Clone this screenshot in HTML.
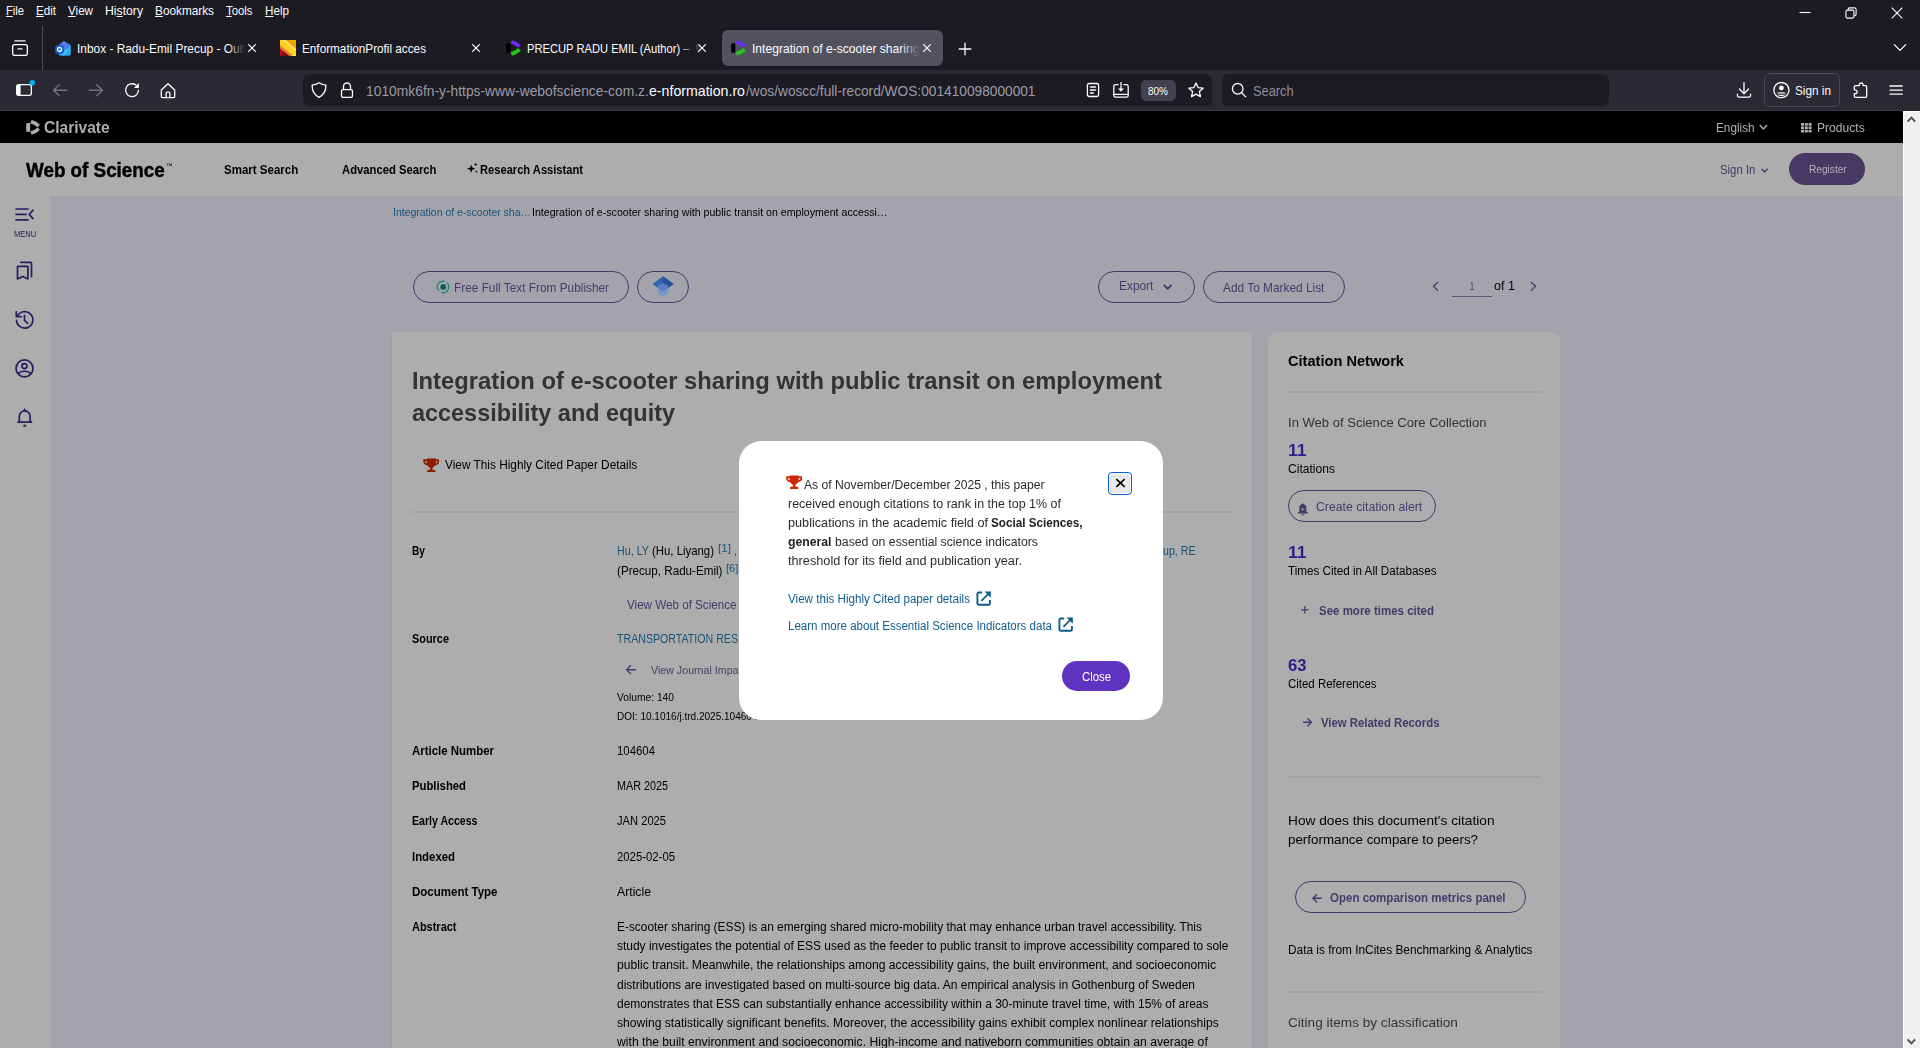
<!DOCTYPE html>
<html lang="en"><head><meta charset="utf-8"><title>Integration of e-scooter sharing with public transit on employment accessibility and equity - Web of Science Core Collection</title>
<style>
html,body{margin:0;padding:0;overflow:hidden;}
body{width:1920px;height:1048px;overflow:hidden;position:relative;background:#A3A3AC;font-family:"Liberation Sans",sans-serif;}
.b{position:absolute;display:block;box-sizing:border-box;}
.t{position:absolute;white-space:nowrap;line-height:1;transform-origin:0 0;font-family:"Liberation Sans",sans-serif;}
u{text-decoration-thickness:1px;text-underline-offset:1px;}
</style></head><body>
<div class="b" style="left:0px;top:0px;width:1920px;height:70px;background:#1C1B22;"></div>
<div class="b" style="left:0px;top:70px;width:1920px;height:41px;background:#2B2A33;"></div>
<div class="b" style="left:0px;top:110px;width:1903px;height:1px;background:#3A3944;"></div>
<div class="b" style="left:42px;top:26px;width:1px;height:44px;background:#4A4952;"></div>
<div class="b" style="left:722px;top:30px;width:221px;height:36px;background:#52525E;border-radius:6px;box-shadow:0 0 2px rgba(0,0,0,0.6);"></div>
<div class="b" style="left:303px;top:74px;width:909px;height:32px;background:#1C1B22;border-radius:6px;"></div>
<div class="b" style="left:1222px;top:74px;width:387px;height:32px;background:#1C1B22;border-radius:6px;"></div>
<div class="b" style="left:1141px;top:80px;width:35px;height:21px;background:#42414D;border-radius:5px;"></div>
<div class="b" style="left:1764px;top:73px;width:76px;height:34px;border:1px solid #4A4954;border-radius:6px;"></div>
<svg class="b" style="left:12px;top:40px;" width="16" height="16" viewBox="0 0 16 16"><path d="M3 0.9h10" fill="none" stroke="#FBFBFE" stroke-width="1.3" stroke-linecap="round" stroke-linejoin="round"/><rect x="0.65" y="4.6" width="14.7" height="10.8" rx="2" fill="none" stroke="#FBFBFE" stroke-width="1.3" stroke-linecap="round" stroke-linejoin="round"/><path d="M6 8.9h4" fill="none" stroke="#FBFBFE" stroke-width="1.3" stroke-linecap="round" stroke-linejoin="round"/></svg>
<svg class="b" style="left:55px;top:40px;" width="16" height="16" viewBox="0 0 16 16"><defs><linearGradient id="og1" x1="0" y1="0" x2="1" y2="1"><stop offset="0" stop-color="#35B8F1"/><stop offset="1" stop-color="#1B6FD8"/></linearGradient>
<linearGradient id="og2" x1="0" y1="0" x2="1" y2="1"><stop offset="0" stop-color="#7A5CF0"/><stop offset="1" stop-color="#3B8FEA"/></linearGradient></defs>
<path d="M8.5 1 L15.6 5.2 V14 a1.6 1.6 0 0 1 -1.6 1.6 H4 L3 6 Z" fill="url(#og1)"/>
<path d="M8.5 1 L15.6 5.2 L9 10.5 L4.5 5 Z" fill="url(#og2)" opacity="0.9"/>
<path d="M15.6 6.5 V14 a1.6 1.6 0 0 1 -1.6 1.6 H6 Z" fill="#28A8EA"/>
<path d="M9 10.8 L15.6 6.2 V8 L9 15.6 H5 Z" fill="#50D9FF" opacity="0.55"/>
<rect x="0.2" y="5.2" width="8.6" height="8.6" rx="1.8" fill="#0F5FD0"/>
<circle cx="4.5" cy="9.5" r="2" fill="none" stroke="#fff" stroke-width="1.3"/></svg>
<svg class="b" style="left:280px;top:40px;" width="16" height="16" viewBox="0 0 16 16"><defs><linearGradient id="eg" x1="0" y1="0.4" x2="0.6" y2="1"><stop offset="0" stop-color="#B8141C"/><stop offset="1" stop-color="#7A0A0E"/></linearGradient></defs>
<rect width="16" height="16" fill="#EFA500"/>
<path d="M0 0 H5 L16 9.5 V16 H13 L0 5.5 Z" fill="#FFD21E"/>
<path d="M3 0 H5.2 L16 9.3 V11 Z" fill="#FFE98A"/>
<path d="M0 5 L13.5 16 H9.5 L0 8.4 Z" fill="#F0803C"/>
<path d="M0 8.2 L9.7 16 H0 Z" fill="url(#eg)"/>
<path d="M11.5 15.2 L16 15.2 V16 H12.3 Z" fill="#FFE98A"/></svg>
<svg class="b" style="left:505.5px;top:40px;" width="15" height="16" viewBox="0 0 14.2 14.8"><path d="M0.5 3 H4.1 V11.800 H0.5 Q-0.3 7.400 0.5 3 Z" fill="#000"/>
<path d="M5.7 0 Q10.800 1.100 14 4.700 L11.650 7.250 Q8.500 4.600 4.250 3.250 Z" fill="#6D2DF5"/>
<path d="M5.7 14.750 Q10.800 13.650 14 10.050 L11.650 7.500 Q8.500 10.150 4.250 11.500 Z" fill="#25C41A"/></svg>
<svg class="b" style="left:730.5px;top:40px;" width="15" height="16" viewBox="0 0 14.2 14.8"><path d="M0.5 3 H4.1 V11.800 H0.5 Q-0.3 7.400 0.5 3 Z" fill="#000"/>
<path d="M5.7 0 Q10.800 1.100 14 4.700 L11.650 7.250 Q8.500 4.600 4.250 3.250 Z" fill="#6D2DF5"/>
<path d="M5.7 14.750 Q10.800 13.650 14 10.050 L11.650 7.500 Q8.500 10.150 4.250 11.500 Z" fill="#25C41A"/></svg>
<svg class="b" style="left:247px;top:43px;" width="10" height="10" viewBox="0 0 10 10"><path d="M1.6 1.6 L8.4 8.4 M8.4 1.6 L1.6 8.4" stroke="#FBFBFE" stroke-width="1.25" stroke-linecap="round"/></svg>
<svg class="b" style="left:471px;top:43px;" width="10" height="10" viewBox="0 0 10 10"><path d="M1.6 1.6 L8.4 8.4 M8.4 1.6 L1.6 8.4" stroke="#FBFBFE" stroke-width="1.25" stroke-linecap="round"/></svg>
<svg class="b" style="left:697px;top:43px;" width="10" height="10" viewBox="0 0 10 10"><path d="M1.6 1.6 L8.4 8.4 M8.4 1.6 L1.6 8.4" stroke="#FBFBFE" stroke-width="1.25" stroke-linecap="round"/></svg>
<svg class="b" style="left:922px;top:43px;" width="10" height="10" viewBox="0 0 10 10"><path d="M1.6 1.6 L8.4 8.4 M8.4 1.6 L1.6 8.4" stroke="#FBFBFE" stroke-width="1.25" stroke-linecap="round"/></svg>
<svg class="b" style="left:958px;top:42px;" width="14" height="14" viewBox="0 0 14 14"><path d="M7 1.2 V12.8 M1.2 7 H12.8" stroke="#FBFBFE" stroke-width="1.3" stroke-linecap="round"/></svg>
<svg class="b" style="left:1799px;top:7px;" width="12" height="12" viewBox="0 0 12 12"><path d="M0.5 5.5 H11.5" stroke="#FBFBFE" stroke-width="1.1"/></svg>
<svg class="b" style="left:1845px;top:7px;" width="12" height="12" viewBox="0 0 12 12"><rect x="0.9" y="3.1" width="8" height="8" rx="1.6" fill="none" stroke="#FBFBFE" stroke-width="1.1"/><path d="M3.1 2.9 V2.5 a1.6 1.6 0 0 1 1.6 -1.6 H9.5 a1.6 1.6 0 0 1 1.6 1.6 V7.3 a1.6 1.6 0 0 1 -1.6 1.6 H9.1" fill="none" stroke="#FBFBFE" stroke-width="1.1"/></svg>
<svg class="b" style="left:1891px;top:7px;" width="12" height="12" viewBox="0 0 12 12"><path d="M0.7 0.7 L11.3 11.3 M11.3 0.7 L0.7 11.3" stroke="#FBFBFE" stroke-width="1.15"/></svg>
<svg class="b" style="left:1893px;top:43px;" width="14" height="10" viewBox="0 0 14 10"><path d="M1.3 1.6 L7 7.4 L12.7 1.6" fill="none" stroke="#FBFBFE" stroke-width="1.3" stroke-linecap="round" stroke-linejoin="round"/></svg>
<svg class="b" style="left:16px;top:82px;overflow:visible;" width="20" height="16" viewBox="0 0 20 16"><rect x="0.65" y="2.65" width="14.7" height="10.7" rx="2" fill="none" stroke="#FBFBFE" stroke-width="1.3" stroke-linecap="round" stroke-linejoin="round"/><path d="M0.65 4.6 a2 2 0 0 1 2 -2 H4.6 V13.4 H2.6 a2 2 0 0 1 -2 -2 Z" fill="#FBFBFE"/><circle cx="16.3" cy="0.8" r="2.7" fill="#00B3F4"/></svg>
<svg class="b" style="left:52px;top:82px;" width="16" height="16" viewBox="0 0 16 16"><path d="M14.6 8.2 H1.7 M7.2 2.7 L1.6 8.2 L7.2 13.700" fill="none" stroke="#75747F" stroke-width="1.35" stroke-linecap="round" stroke-linejoin="round"/></svg>
<svg class="b" style="left:88px;top:82px;" width="16" height="16" viewBox="0 0 16 16"><path d="M1.4 8.2 H14.3 M8.8 2.7 L14.4 8.2 L8.8 13.700" fill="none" stroke="#75747F" stroke-width="1.35" stroke-linecap="round" stroke-linejoin="round"/></svg>
<svg class="b" style="left:124px;top:82px;" width="16" height="16" viewBox="0 0 16 16"><path d="M14.4 8.2 A6.4 6.4 0 1 1 11.9 3.1" fill="none" stroke="#FBFBFE" stroke-width="1.3" stroke-linecap="round" stroke-linejoin="round"/><path d="M14.9 1.1 V6.1 H9.9 Z" fill="#FBFBFE"/></svg>
<svg class="b" style="left:159.5px;top:82.5px;" width="16" height="16" viewBox="0 0 16 16"><path d="M1.3 7 L8 0.700 L14.7 7 V13.400 a1.3 1.3 0 0 1 -1.3 1.3 H2.6 a1.3 1.3 0 0 1 -1.3 -1.3 Z" fill="none" stroke="#FBFBFE" stroke-width="1.3" stroke-linecap="round" stroke-linejoin="round"/><path d="M6.100 14.500 V10.200 a1 1 0 0 1 1 -1 H8.900 a1 1 0 0 1 1 1 V14.500" fill="none" stroke="#FBFBFE" stroke-width="1.3" stroke-linecap="round" stroke-linejoin="round"/></svg>
<svg class="b" style="left:311px;top:82px;" width="16" height="16" viewBox="0 0 16 16"><path d="M8 0.8 C5.5 2.4 3.2 3 1.1 3.2 C1 8.5 3.2 12.9 8 15.3 C12.8 12.9 15 8.5 14.9 3.2 C12.8 3 10.5 2.4 8 0.8 Z" fill="none" stroke="#FBFBFE" stroke-width="1.3" stroke-linecap="round" stroke-linejoin="round"/></svg>
<svg class="b" style="left:339px;top:82px;" width="16" height="16" viewBox="0 0 16 16"><rect x="2.5" y="7.6" width="11" height="7.8" rx="1.6" fill="none" stroke="#FBFBFE" stroke-width="1.3" stroke-linecap="round" stroke-linejoin="round"/><path d="M4.5 7.4 V4.5 a3.5 3.5 0 0 1 7 0 V7.4" fill="none" stroke="#FBFBFE" stroke-width="1.3" stroke-linecap="round" stroke-linejoin="round"/></svg>
<svg class="b" style="left:1085px;top:82px;" width="16" height="16" viewBox="0 0 16 16"><rect x="2.4" y="1.500" width="11.2" height="13" rx="1.8" fill="none" stroke="#FBFBFE" stroke-width="1.3" stroke-linecap="round" stroke-linejoin="round"/><path d="M5.400 5 H10.600 M5.400 8 H10.600 M5.400 11 H8.400" fill="none" stroke="#FBFBFE" stroke-width="1.3" stroke-linecap="round" stroke-linejoin="round"/></svg>
<svg class="b" style="left:1113px;top:81.5px;" width="16" height="16" viewBox="0 0 16 16"><path d="M5.2 2.6 H2.4 a1.6 1.6 0 0 0 -1.6 1.6 V13.6 a1.6 1.6 0 0 0 1.6 1.6 H13.6 a1.6 1.6 0 0 0 1.6 -1.6 V4.2 a1.6 1.6 0 0 0 -1.6 -1.6 H10.8 M0.8 12.4 H15.2" fill="none" stroke="#FBFBFE" stroke-width="1.3" stroke-linecap="round" stroke-linejoin="round"/><path d="M8 0.6 V8.4" fill="none" stroke="#FBFBFE" stroke-width="1.3" stroke-linecap="round" stroke-linejoin="round"/><path d="M5 6.6 H11 L8 9.8 Z" fill="#FBFBFE"/></svg>
<svg class="b" style="left:1188px;top:82px;" width="16" height="16" viewBox="0 0 16 16"><path d="M8 1 L10.1 5.6 L15.1 6.2 L11.4 9.6 L12.4 14.6 L8 12.1 L3.6 14.6 L4.6 9.6 L0.9 6.2 L5.9 5.6 Z" fill="none" stroke="#FBFBFE" stroke-width="1.3" stroke-linecap="round" stroke-linejoin="round"/></svg>
<svg class="b" style="left:1231px;top:82px;" width="16" height="16" viewBox="0 0 16 16"><circle cx="6.7" cy="6.8" r="5.3" fill="none" stroke="#FBFBFE" stroke-width="1.3" stroke-linecap="round" stroke-linejoin="round"/><path d="M10.6 10.7 L14.8 14.9" fill="none" stroke="#FBFBFE" stroke-width="1.3" stroke-linecap="round" stroke-linejoin="round"/></svg>
<svg class="b" style="left:1735.5px;top:81.5px;" width="16" height="16" viewBox="0 0 16 16"><path d="M8 0.7 V11.6 M3.4 7 L8 11.8 L12.6 7 M1.4 12.2 V13.6 a1.6 1.6 0 0 0 1.6 1.6 H13 a1.6 1.6 0 0 0 1.6 -1.6 V12.2" fill="none" stroke="#FBFBFE" stroke-width="1.3" stroke-linecap="round" stroke-linejoin="round"/></svg>
<svg class="b" style="left:1772.5px;top:82px;" width="17" height="17" viewBox="0 0 17 17"><circle cx="8.4" cy="8.1" r="7.6" fill="none" stroke="#FBFBFE" stroke-width="1.3" stroke-linecap="round" stroke-linejoin="round"/><circle cx="8.4" cy="5.9" r="2.4" fill="#FBFBFE"/><path d="M3.9 11.2 C4.6 9.8 12.2 9.8 12.9 11.2 V11.6 H3.9 Z" fill="#FBFBFE"/><path d="M4.5 12.8 H12.3 C11 14.4 5.8 14.4 4.5 12.8 Z" fill="#FBFBFE"/></svg>
<svg class="b" style="left:1852.5px;top:82px;" width="16" height="16" viewBox="0 0 16 16"><path d="M6.3 3.6 V2.9 a1.9 1.9 0 0 1 3.8 0 V3.6 H12.4 a1.3 1.3 0 0 1 1.3 1.3 V14 a1.3 1.3 0 0 1 -1.3 1.3 H2.6 a1.3 1.3 0 0 1 -1.3 -1.3 V11.6 H2.2 a1.9 1.9 0 0 0 0 -3.8 H1.3 V4.9 a1.3 1.3 0 0 1 1.3 -1.3 Z" fill="none" stroke="#FBFBFE" stroke-width="1.3" stroke-linecap="round" stroke-linejoin="round"/></svg>
<svg class="b" style="left:1888px;top:82px;" width="16" height="16" viewBox="0 0 16 16"><path d="M2 4 H14.3 M2 8.1 H14.3 M2 12.1 H14.3" fill="none" stroke="#FBFBFE" stroke-width="1.3" stroke-linecap="round" stroke-linejoin="round"/></svg>
<span class="t" style="left:6.00px;top:5px;font-size:12px;color:#FBFBFE;transform:scaleX(0.9298);"><u>F</u>ile</span>
<span class="t" style="left:36.00px;top:5px;font-size:12px;color:#FBFBFE;transform:scaleX(0.9660);"><u>E</u>dit</span>
<span class="t" style="left:68.00px;top:5px;font-size:12px;color:#FBFBFE;transform:scaleX(0.9685);"><u>V</u>iew</span>
<span class="t" style="left:105.00px;top:5px;font-size:12px;color:#FBFBFE;transform:scaleX(1.0171);">Hi<u>s</u>tory</span>
<span class="t" style="left:155.00px;top:5px;font-size:12px;color:#FBFBFE;transform:scaleX(0.9828);"><u>B</u>ookmarks</span>
<span class="t" style="left:226.00px;top:5px;font-size:12px;color:#FBFBFE;transform:scaleX(0.9459);"><u>T</u>ools</span>
<span class="t" style="left:265.00px;top:5px;font-size:12px;color:#FBFBFE;transform:scaleX(0.9722);"><u>H</u>elp</span>
<span class="t" style="left:76.50px;top:42px;font-size:13px;color:#FBFBFE;transform:scaleX(0.9146);">Inbox - Radu-Emil Precup - Outl</span>
<span class="t" style="left:301.75px;top:42px;font-size:13px;color:#FBFBFE;transform:scaleX(0.9033);">EnformationProfil acces</span>
<span class="t" style="left:526.50px;top:42px;font-size:13px;color:#FBFBFE;transform:scaleX(0.8585);">PRECUP RADU EMIL (Author) –</span>
<span class="t" style="left:692.50px;top:42px;font-size:13px;color:#FBFBFE;opacity:0.25;transform:scaleX(0.6107);">W</span>
<span class="t" style="left:751.50px;top:42px;font-size:13px;color:#FBFBFE;transform:scaleX(0.9309);">Integration of e-scooter sharing</span>
<div class="b" style="left:228px;top:40px;width:18px;height:18px;background:linear-gradient(90deg,rgba(28,27,34,0),#1C1B22 95%)"></div>
<div class="b" style="left:680px;top:40px;width:16px;height:18px;background:linear-gradient(90deg,rgba(28,27,34,0),#1C1B22 95%)"></div>
<div class="b" style="left:900px;top:40px;width:20px;height:18px;background:linear-gradient(90deg,rgba(82,82,94,0),#52525E 100%)"></div>
<span class="t" style="left:365.75px;top:84px;font-size:14.5px;color:#9C9CA8;transform:scaleX(0.9535);">1010mk6fn-y-https-www-webofscience-com.z.</span>
<span class="t" style="left:649.00px;top:84px;font-size:14.5px;color:#FBFBFE;transform:scaleX(0.9763);">e-nformation.ro</span>
<span class="t" style="left:745.50px;top:84px;font-size:14.5px;color:#9C9CA8;transform:scaleX(0.9452);">/wos/woscc/full-record/WOS:001410098000001</span>
<span class="t" style="left:1148.00px;top:86px;font-size:10.6px;color:#FBFBFE;transform:scaleX(0.9433);">80%</span>
<span class="t" style="left:1252.50px;top:84px;font-size:14px;color:#8F8F9D;transform:scaleX(0.9130);">Search</span>
<span class="t" style="left:1795.00px;top:84px;font-size:13px;color:#FBFBFE;transform:scaleX(0.9057);">Sign in</span>
<div id="page" style="position:absolute;left:0;top:0;width:1920px;height:1048px;overflow:hidden;will-change:transform">
<div class="b" style="left:0px;top:111px;width:1903px;height:32px;background:#000;"></div>
<div class="b" style="left:0px;top:143px;width:1903px;height:53px;background:#ADADAD;"></div>
<div class="b" style="left:0px;top:196px;width:50px;height:852px;background:#ADADAD;"></div>
<div class="b" style="left:1903px;top:111px;width:17px;height:937px;background:#F0F0F0;border-left:1px solid #FFFFFF;border-top:1px solid #FFFFFF;"></div>
<svg class="b" style="left:1906px;top:114.5px;" width="11" height="9" viewBox="0 0 11 9"><path d="M1.6 6.600 L5.4 2.600 L9.2 6.600" fill="none" stroke="#505050" stroke-width="2" stroke-linejoin="miter"/></svg>
<svg class="b" style="left:1906px;top:1037px;" width="11" height="9" viewBox="0 0 11 9"><path d="M1.6 2.400 L5.4 6.400 L9.2 2.400" fill="none" stroke="#505050" stroke-width="2" stroke-linejoin="miter"/></svg>
<div class="b" style="left:391px;top:335px;width:1px;height:713px;background:#9C9CA6;"></div>
<div class="b" style="left:1252px;top:335px;width:1px;height:713px;background:#9A9AA4;"></div>
<div class="b" style="left:392px;top:331.8px;width:860px;height:716.2px;background:#ADADAD;border-radius:3px 3px 0 0;"></div>
<div class="b" style="left:1268px;top:331.8px;width:292px;height:716.2px;background:#ADADAD;border-radius:9.6px 9.6px 0 0;"></div>
<div class="b" style="left:412px;top:511px;width:820px;height:2px;background:#A2A2A2;"></div>
<div class="b" style="left:1288px;top:391px;width:253px;height:2px;background:#A2A2A2;"></div>
<div class="b" style="left:1288px;top:776px;width:253px;height:2px;background:#A2A2A2;"></div>
<div class="b" style="left:1288px;top:991px;width:253px;height:2px;background:#A2A2A2;"></div>
<div class="b" style="left:413px;top:271px;width:216px;height:32px;border:1px solid #463A6C;border-radius:16.0px;"></div>
<div class="b" style="left:637px;top:271px;width:52px;height:32px;border:1px solid #463A6C;border-radius:16.0px;"></div>
<div class="b" style="left:1098px;top:271px;width:97px;height:32px;border:1px solid #463A6C;border-radius:16.0px;"></div>
<div class="b" style="left:1203px;top:271px;width:142px;height:32px;border:1px solid #463A6C;border-radius:16.0px;"></div>
<div class="b" style="left:1288px;top:490px;width:148px;height:32px;border:1px solid #463A6C;border-radius:16.0px;"></div>
<div class="b" style="left:1295px;top:881px;width:231px;height:32px;border:1px solid #463A6C;border-radius:16.0px;"></div>
<div class="b" style="left:1789px;top:153px;width:76px;height:32px;background:#463964;border-radius:16px;"></div>
<div class="b" style="left:1452px;top:296px;width:40px;height:1px;background:#5E5A78;"></div>
<span class="t" style="left:43.50px;top:120px;font-size:16px;color:#ADADAD;font-weight:700;transform:scaleX(0.9720);">Clarivate</span>
<span class="t" style="left:1715.60px;top:122px;font-size:12px;color:#B2B2B2;transform:scaleX(0.9807);">English</span>
<span class="t" style="left:1816.90px;top:122px;font-size:12px;color:#B2B2B2;transform:scaleX(1.0072);">Products</span>
<span class="t" style="left:26.30px;top:160px;font-size:20px;color:#000;font-weight:700;transform:scaleX(0.9406);-webkit-text-stroke:0.45px #000;">Web of Science</span>
<span class="t" style="left:165.60px;top:163px;font-size:6.5px;color:#000;transform:scaleX(0.9846);">™</span>
<span class="t" style="left:223.75px;top:163px;font-size:13.4px;color:#000;font-weight:700;transform:scaleX(0.8599);">Smart Search</span>
<span class="t" style="left:341.50px;top:163px;font-size:13.4px;color:#000;font-weight:700;transform:scaleX(0.8408);">Advanced Search</span>
<span class="t" style="left:480.00px;top:163px;font-size:13.4px;color:#000;font-weight:700;transform:scaleX(0.8319);">Research Assistant</span>
<span class="t" style="left:1719.60px;top:164px;font-size:12px;color:#463A6C;transform:scaleX(0.9476);">Sign In</span>
<span class="t" style="left:1808.50px;top:164px;font-size:10.6px;color:#B4B2BE;transform:scaleX(0.9568);">Register</span>
<span class="t" style="left:13.75px;top:230px;font-size:8.5px;color:#2A1D5C;transform:scaleX(0.8889);">MENU</span>
<span class="t" style="left:392.50px;top:207px;font-size:11px;color:#17537A;transform:scaleX(0.9522);">Integration of e-scooter sha…</span>
<span class="t" style="left:531.50px;top:207px;font-size:11px;color:#000;transform:scaleX(0.9642);">Integration of e-scooter sharing with public transit on employment accessi…</span>
<span class="t" style="left:453.70px;top:282px;font-size:12.2px;color:#463A6C;transform:scaleX(0.9713);">Free Full Text From Publisher</span>
<span class="t" style="left:1119.20px;top:280px;font-size:12.2px;color:#463A6C;transform:scaleX(0.9763);">Export</span>
<span class="t" style="left:1223.40px;top:282px;font-size:12.2px;color:#463A6C;transform:scaleX(0.9740);">Add To Marked List</span>
<span class="t" style="left:1470.00px;top:282px;font-size:10px;color:#3A3A3A;transform:scaleX(0.7191);">1</span>
<span class="t" style="left:1494.00px;top:279px;font-size:13.4px;color:#000;transform:scaleX(0.9399);">of 1</span>
<span class="t" style="left:412.00px;top:369px;font-size:24px;color:#333;font-weight:700;transform:scaleX(0.9902);">Integration of e-scooter sharing with public transit on employment</span>
<span class="t" style="left:412.00px;top:401px;font-size:24px;color:#333;font-weight:700;transform:scaleX(0.9761);">accessibility and equity</span>
<span class="t" style="left:444.70px;top:459px;font-size:12px;color:#000;transform:scaleX(0.9862);">View This Highly Cited Paper Details</span>
<span class="t" style="left:412.00px;top:545px;font-size:12px;color:#000;font-weight:700;transform:scaleX(0.8473);">By</span>
<span class="t" style="left:412.00px;top:633px;font-size:12px;color:#000;font-weight:700;transform:scaleX(0.9094);">Source</span>
<span class="t" style="left:412.00px;top:745px;font-size:12px;color:#000;font-weight:700;transform:scaleX(0.9531);">Article Number</span>
<span class="t" style="left:412.00px;top:780px;font-size:12px;color:#000;font-weight:700;transform:scaleX(0.9417);">Published</span>
<span class="t" style="left:412.00px;top:815px;font-size:12px;color:#000;font-weight:700;transform:scaleX(0.8818);">Early Access</span>
<span class="t" style="left:412.00px;top:851px;font-size:12px;color:#000;font-weight:700;transform:scaleX(0.9480);">Indexed</span>
<span class="t" style="left:412.00px;top:886px;font-size:12px;color:#000;font-weight:700;transform:scaleX(0.9593);">Document Type</span>
<span class="t" style="left:412.00px;top:921px;font-size:12px;color:#000;font-weight:700;transform:scaleX(0.9140);">Abstract</span>
<span class="t" style="left:617.00px;top:545px;font-size:12px;color:#17537A;transform:scaleX(0.8939);">Hu, LY</span>
<span class="t" style="left:652.00px;top:545px;font-size:12px;color:#000;transform:scaleX(0.9484);">(Hu, Liyang)</span>
<span class="t" style="left:717.50px;top:543px;font-size:11px;color:#17537A;transform:scaleX(1.0626);">[1]</span>
<span class="t" style="left:733.50px;top:545px;font-size:12px;color:#17537A;transform:scaleX(0.8972);">,</span>
<span class="t" style="left:1162.50px;top:545px;font-size:12px;color:#17537A;transform:scaleX(0.8859);">up, RE</span>
<span class="t" style="left:617.00px;top:565px;font-size:12px;color:#000;transform:scaleX(0.9705);">(Precup, Radu-Emil)</span>
<span class="t" style="left:725.50px;top:563px;font-size:11px;color:#17537A;transform:scaleX(1.0217);">[6]</span>
<span class="t" style="left:626.50px;top:599px;font-size:12.2px;color:#463A6C;transform:scaleX(0.9545);">View Web of Science</span>
<span class="t" style="left:617.00px;top:633px;font-size:12px;color:#17537A;transform:scaleX(0.8852);">TRANSPORTATION RES</span>
<span class="t" style="left:650.50px;top:665px;font-size:10.8px;color:#463A6C;transform:scaleX(0.9873);">View Journal Impa</span>
<span class="t" style="left:617.00px;top:693px;font-size:10.4px;color:#000;transform:scaleX(0.9865);">Volume: 140</span>
<span class="t" style="left:617.00px;top:712px;font-size:10.4px;color:#000;transform:scaleX(0.9651);">DOI: 10.1016/j.trd.2025.104604</span>
<span class="t" style="left:617.00px;top:745px;font-size:12px;color:#000;transform:scaleX(0.9489);">104604</span>
<span class="t" style="left:617.00px;top:780px;font-size:12px;color:#000;transform:scaleX(0.8994);">MAR 2025</span>
<span class="t" style="left:617.00px;top:815px;font-size:12px;color:#000;transform:scaleX(0.9297);">JAN 2025</span>
<span class="t" style="left:617.00px;top:851px;font-size:12px;color:#000;transform:scaleX(0.9448);">2025-02-05</span>
<span class="t" style="left:617.00px;top:886px;font-size:12px;color:#000;transform:scaleX(1.0197);">Article</span>
<span class="t" style="left:617.00px;top:921px;font-size:12px;color:#000;transform:scaleX(0.9918);">E-scooter sharing (ESS) is an emerging shared micro-mobility that may enhance urban travel accessibility. This</span>
<span class="t" style="left:617.00px;top:940px;font-size:12px;color:#000;transform:scaleX(0.9963);">study investigates the potential of ESS used as the feeder to public transit to improve accessibility compared to sole</span>
<span class="t" style="left:617.00px;top:959px;font-size:12px;color:#000;transform:scaleX(1.0113);">public transit. Meanwhile, the relationships among accessibility gains, the built environment, and socioeconomic</span>
<span class="t" style="left:617.00px;top:979px;font-size:12px;color:#000;transform:scaleX(1.0006);">distributions are investigated based on multi-source big data. An empirical analysis in Gothenburg of Sweden</span>
<span class="t" style="left:617.00px;top:998px;font-size:12px;color:#000;transform:scaleX(0.9964);">demonstrates that ESS can substantially enhance accessibility within a 30-minute travel time, with 15% of areas</span>
<span class="t" style="left:617.00px;top:1017px;font-size:12px;color:#000;transform:scaleX(1.0092);">showing statistically significant benefits. Moreover, the accessibility gains exhibit complex nonlinear relationships</span>
<span class="t" style="left:617.00px;top:1036px;font-size:12px;color:#000;transform:scaleX(1.0145);">with the built environment and socioeconomic. High-income and nativeborn communities obtain an average of</span>
<span class="t" style="left:1288.00px;top:353px;font-size:15px;color:#000;font-weight:700;transform:scaleX(0.9733);">Citation Network</span>
<span class="t" style="left:1288.00px;top:416px;font-size:13.4px;color:#333;transform:scaleX(0.9745);">In Web of Science Core Collection</span>
<span class="t" style="left:1288.00px;top:442px;font-size:17px;color:#2A1E8C;font-weight:700;transform:scaleX(1.0287);">11</span>
<span class="t" style="left:1288.00px;top:463px;font-size:12px;color:#000;transform:scaleX(1.0067);">Citations</span>
<span class="t" style="left:1316.25px;top:501px;font-size:12px;color:#463A6C;transform:scaleX(1.0210);">Create citation alert</span>
<span class="t" style="left:1288.00px;top:544px;font-size:17px;color:#2A1E8C;font-weight:700;transform:scaleX(1.0287);">11</span>
<span class="t" style="left:1288.00px;top:565px;font-size:12px;color:#000;transform:scaleX(0.9709);">Times Cited in All Databases</span>
<span class="t" style="left:1318.50px;top:605px;font-size:12px;color:#463A6C;font-weight:700;transform:scaleX(0.9578);">See more times cited</span>
<span class="t" style="left:1288.00px;top:657px;font-size:17px;color:#2A1E8C;font-weight:700;transform:scaleX(0.9777);">63</span>
<span class="t" style="left:1288.00px;top:678px;font-size:12px;color:#000;transform:scaleX(0.9545);">Cited References</span>
<span class="t" style="left:1320.50px;top:717px;font-size:12px;color:#463A6C;font-weight:700;transform:scaleX(0.9467);">View Related Records</span>
<span class="t" style="left:1288.00px;top:814px;font-size:13.4px;color:#000;transform:scaleX(1.0221);">How does this document&#x27;s citation</span>
<span class="t" style="left:1288.00px;top:833px;font-size:13.4px;color:#000;transform:scaleX(0.9971);">performance compare to peers?</span>
<span class="t" style="left:1330.00px;top:892px;font-size:12px;color:#463A6C;font-weight:700;transform:scaleX(0.9605);">Open comparison metrics panel</span>
<span class="t" style="left:1288.00px;top:944px;font-size:12px;color:#000;transform:scaleX(0.9881);">Data is from InCites Benchmarking &amp; Analytics</span>
<span class="t" style="left:1287.60px;top:1016px;font-size:13.4px;color:#333;transform:scaleX(1.0146);">Citing items by classification</span>
<svg class="b" style="left:25.8px;top:119.9px;" width="14.2" height="14.8" viewBox="0 0 14.2 14.8"><path d="M0.5 3 H4.1 V11.800 H0.5 Q-0.3 7.400 0.5 3 Z" fill="#ADADAD"/>
<path d="M5.7 0 Q10.800 1.100 14 4.700 L11.650 7.250 Q8.500 4.600 4.250 3.250 Z" fill="#ADADAD"/>
<path d="M5.7 14.750 Q10.800 13.650 14 10.050 L11.650 7.500 Q8.500 10.150 4.250 11.500 Z" fill="#ADADAD"/></svg>
<svg class="b" style="left:1759px;top:124px;" width="9" height="7" viewBox="0 0 9 7"><path d="M1.2 1.6 L4.4 5 L7.6 1.6" fill="none" stroke="#ADADAD" stroke-width="1.5" stroke-linecap="round" stroke-linejoin="round"/></svg>
<svg class="b" style="left:1801.2px;top:123.2px;" width="11" height="10" viewBox="0 0 11 10"><rect x="0.0" y="0.0" width="3" height="2.7" fill="#ADADAD"/><rect x="0.0" y="3.4" width="3" height="2.7" fill="#ADADAD"/><rect x="0.0" y="6.8" width="3" height="2.7" fill="#ADADAD"/><rect x="3.8" y="0.0" width="3" height="2.7" fill="#ADADAD"/><rect x="3.8" y="3.4" width="3" height="2.7" fill="#ADADAD"/><rect x="3.8" y="6.8" width="3" height="2.7" fill="#ADADAD"/><rect x="7.6" y="0.0" width="3" height="2.7" fill="#ADADAD"/><rect x="7.6" y="3.4" width="3" height="2.7" fill="#ADADAD"/><rect x="7.6" y="6.8" width="3" height="2.7" fill="#ADADAD"/></svg>
<svg class="b" style="left:1761px;top:168px;" width="8" height="6" viewBox="0 0 8 6"><path d="M1 1.2 L3.6 4 L6.2 1.2" fill="none" stroke="#463A6C" stroke-width="1.4" stroke-linecap="round" stroke-linejoin="round"/></svg>
<svg class="b" style="left:466px;top:162px;" width="13" height="13" viewBox="0 0 13 13"><path d="M5.2 2.4 L6.3 5.6 L9.5 6.7 L6.3 7.8 L5.2 11 L4.1 7.8 L0.9 6.7 L4.1 5.6 Z" fill="#000"/>
<path d="M9.8 0.6 L10.3 2.1 L11.8 2.6 L10.3 3.1 L9.8 4.6 L9.3 3.1 L7.8 2.6 L9.3 2.1 Z" fill="#000"/>
<path d="M10.2 8.2 L10.6 9.3 L11.7 9.7 L10.6 10.1 L10.2 11.2 L9.8 10.1 L8.7 9.7 L9.8 9.3 Z" fill="#000"/></svg>
<svg class="b" style="left:14px;top:206px;" width="22" height="18" viewBox="0 0 22 18"><path d="M1.4 3 H14.7 M1.4 8.4 H12.7 M1.4 13.9 H14.7" fill="none" stroke="#2A1D5C" stroke-width="1.7" stroke-linecap="butt" stroke-linejoin="miter"/><path d="M19.4 3.6 L15.2 8.4 L19.4 13.1" fill="none" stroke="#2A1D5C" stroke-width="1.7" stroke-linecap="butt" stroke-linejoin="miter"/></svg>
<svg class="b" style="left:15px;top:260px;" width="20" height="22" viewBox="0 0 20 22"><path d="M2.5 6.3 H12.9 V18.9 L7.7 16.4 L2.5 18.9 Z" fill="none" stroke="#2A1D5C" stroke-width="1.7" stroke-linecap="round" stroke-linejoin="round"/><path d="M5.8 2.3 H15.5 a1 1 0 0 1 1 1 V16.6" fill="none" stroke="#2A1D5C" stroke-width="1.7" stroke-linecap="round" stroke-linejoin="round"/></svg>
<svg class="b" style="left:14px;top:308.6px;" width="22" height="22" viewBox="0 0 22 22"><path d="M3.3 7.3 A8.2 8.2 0 1 1 2.5 11.4" fill="none" stroke="#2A1D5C" stroke-width="1.7" stroke-linecap="round" stroke-linejoin="round"/><path d="M2.3 2.6 V7.6 H7.3" fill="none" stroke="#2A1D5C" stroke-width="1.7" stroke-linecap="round" stroke-linejoin="round"/><path d="M10.5 6.3 V11.4 L13.7 14.3" fill="none" stroke="#2A1D5C" stroke-width="1.7" stroke-linecap="round" stroke-linejoin="round"/></svg>
<svg class="b" style="left:14px;top:358px;" width="22" height="22" viewBox="0 0 22 22"><circle cx="10.5" cy="10.4" r="8.5" fill="none" stroke="#2A1D5C" stroke-width="1.7" stroke-linecap="round" stroke-linejoin="round"/><circle cx="10.4" cy="8.1" r="2.5" fill="none" stroke="#2A1D5C" stroke-width="1.7" stroke-linecap="round" stroke-linejoin="round"/><path d="M4.3 15.8 C6.5 12.4 14.3 12.4 16.6 15.8" fill="none" stroke="#2A1D5C" stroke-width="1.7" stroke-linecap="round" stroke-linejoin="round"/></svg>
<svg class="b" style="left:15px;top:407px;" width="20" height="22" viewBox="0 0 20 22"><path d="M4.3 14.8 V9.3 a5.4 5.4 0 0 1 10.8 0 V14.8" fill="none" stroke="#2A1D5C" stroke-width="1.7" stroke-linecap="round" stroke-linejoin="round"/><path d="M2.2 15.1 H17.2" fill="none" stroke="#2A1D5C" stroke-width="1.7" stroke-linecap="butt" stroke-linejoin="miter"/><path d="M9.7 3.6 V2.3" fill="none" stroke="#2A1D5C" stroke-width="1.7" stroke-linecap="round" stroke-linejoin="round"/><path d="M8.3 18.7 H11.1" stroke="#2A1D5C" stroke-width="2" fill="none"/></svg>
<svg class="b" style="left:436px;top:280px;" width="14" height="14" viewBox="0 0 14 14"><circle cx="7.2" cy="6.9" r="2.9" fill="#0E5A5C"/>
<path d="M2.9 10.9 A5.8 5.8 0 0 1 8.6 1.3" fill="none" stroke="#1C7F70" stroke-width="1.2"/>
<path d="M11 2.6 A5.8 5.8 0 0 1 5.4 12.4" fill="none" stroke="#1C7F70" stroke-width="1.2"/></svg>
<svg class="b" style="left:652px;top:275.5px;" width="22" height="21" viewBox="0 0 22 21"><circle cx="11" cy="14" r="5.9" fill="#7C95C9"/>
<path d="M0.5 8 L11 0.3 L21.5 8 L11 15.6 Z" fill="#3563B6"/>
<path d="M11 0.3 L21.5 8 L16.2 11.9 L11 8 Z" fill="#264E9A"/>
<path d="M5.4 11.6 A5.9 5.9 0 0 1 16.6 11.6 L11 15.7 Z" fill="#7C95C9" opacity="0.55"/></svg>
<svg class="b" style="left:1162.5px;top:284px;" width="10" height="7" viewBox="0 0 10 7"><path d="M1.3 1.5 L4.6 4.9 L7.9 1.5" fill="none" stroke="#463A6C" stroke-width="1.8" stroke-linecap="round" stroke-linejoin="round"/></svg>
<svg class="b" style="left:1431px;top:280.5px;" width="9" height="11" viewBox="0 0 9 11"><path d="M6.6 1.4 L2.4 5.3 L6.6 9.2" fill="none" stroke="#463A6C" stroke-width="1.3" stroke-linecap="round" stroke-linejoin="round"/></svg>
<svg class="b" style="left:1528.5px;top:280.5px;" width="9" height="11" viewBox="0 0 9 11"><path d="M2.4 1.4 L6.6 5.3 L2.4 9.2" fill="none" stroke="#463A6C" stroke-width="1.3" stroke-linecap="round" stroke-linejoin="round"/></svg>
<svg class="b" style="left:422.6px;top:457.7px;" width="16.6" height="14.4" viewBox="0 0 576 512"><path d="M127.6 16 H448.4 V48 H552 C565.3 48 576 58.7 576 72 V128 C576 189 506 253 421 270 C393 314 352 344 328 356 V416 H376 C411 416 440 445 440 480 V500 C440 506.6 434.6 512 428 512 H148 C141.4 512 136 506.600 136 500 V480 C136 445 165 416 200 416 H248 V356 C224 344 183 314 155 270 C70 253 0 189 0 128 V72 C0 58.7 10.700 48 24 48 H127.6 Z M64 112 V128 C64 150 92 184 128.500 199 C127.9 172 127.6 112 127.6 112 Z M512 112 H448.4 C448.4 112 448.100 172 447.500 199 C484 184 512 150 512 128 Z" fill="#8E1C00" fill-rule="evenodd"/></svg>
<svg class="b" style="left:625px;top:664px;" width="13" height="12" viewBox="0 0 13 12"><path d="M11 5.7 H1.8 M6 1.3 L1.6 5.7 L6 10.1" fill="none" stroke="#463A6C" stroke-width="1.35" stroke-linecap="butt" stroke-linejoin="miter"/></svg>
<svg class="b" style="left:1300px;top:605px;" width="10" height="10" viewBox="0 0 10 10"><path d="M4.8 1 V8.6 M1 4.8 H8.6" fill="none" stroke="#463A6C" stroke-width="1.2"/></svg>
<svg class="b" style="left:1301.5px;top:716.5px;" width="12" height="11" viewBox="0 0 12 11"><path d="M1 5.2 H9.4 M5.4 1.2 L9.5 5.2 L5.4 9.2" fill="none" stroke="#463A6C" stroke-width="1.35" stroke-linecap="butt" stroke-linejoin="miter"/></svg>
<svg class="b" style="left:1310.5px;top:892.5px;" width="12" height="11" viewBox="0 0 12 11"><path d="M10.6 5.2 H2 M6 1.2 L1.9 5.2 L6 9.2" fill="none" stroke="#463A6C" stroke-width="1.35" stroke-linecap="butt" stroke-linejoin="miter"/></svg>
<svg class="b" style="left:1296.5px;top:502.5px;" width="12" height="13" viewBox="0 0 12 13"><path d="M5.8 0.3 L9.3 3 V8.6 L10.9 9.6 V10.5 H0.7 V9.6 L2.3 8.6 V3 Z" fill="#463A6C"/><path d="M4.4 11.2 H7.2 V11.9 Q5.800 12.6 4.4 11.900 Z" fill="#463A6C"/><path d="M5.800 4.4 L6.300 5.700 L7.600 6.200 L6.300 6.700 L5.800 8 L5.300 6.700 L4 6.200 L5.300 5.700 Z" fill="#ADADAD"/></svg>
<div class="b" style="left:738.8px;top:440.7px;width:424.3px;height:279.4px;background:#FFFFFF;border-radius:22.4px;"></div>
<div class="b" style="left:1108px;top:472px;width:24px;height:23px;background:#FFFFFF;border:1px solid #0060DF;border-radius:4px;"></div>
<div class="b" style="left:1110px;top:474px;width:20px;height:19px;background:#E9E9ED;border-radius:3px;"></div>
<div class="b" style="left:1062px;top:661px;width:68px;height:30px;background:#5E33BF;border-radius:15px;"></div>
<span class="t" style="left:803.50px;top:479px;font-size:12px;color:#2B2B2B;transform:scaleX(1.0128);">As of November/December 2025 , this paper</span>
<span class="t" style="left:787.50px;top:498px;font-size:12px;color:#2B2B2B;transform:scaleX(1.0386);">received enough citations to rank in the top 1% of</span>
<span class="t" style="left:787.50px;top:517px;font-size:12px;color:#2B2B2B;transform:scaleX(1.0557);">publications in the academic field of</span>
<span class="t" style="left:991.00px;top:517px;font-size:12px;color:#222;font-weight:700;transform:scaleX(0.9728);">Social Sciences,</span>
<span class="t" style="left:787.50px;top:536px;font-size:12px;color:#222;font-weight:700;transform:scaleX(1.0190);">general</span>
<span class="t" style="left:834.50px;top:536px;font-size:12px;color:#2B2B2B;transform:scaleX(1.0211);">based on essential science indicators</span>
<span class="t" style="left:787.50px;top:555px;font-size:12px;color:#2B2B2B;transform:scaleX(1.0597);">threshold for its field and publication year.</span>
<span class="t" style="left:787.50px;top:593px;font-size:12px;color:#0F5C8E;transform:scaleX(0.9687);">View this Highly Cited paper details</span>
<span class="t" style="left:787.50px;top:620px;font-size:12px;color:#0F5C8E;transform:scaleX(0.9606);">Learn more about Essential Science Indicators data</span>
<span class="t" style="left:1082.00px;top:671px;font-size:12.2px;color:#FFFFFF;transform:scaleX(0.9303);">Close</span>
<svg class="b" style="left:785.8px;top:474.9px;" width="16.3" height="14.3" viewBox="0 0 576 512"><path d="M127.6 16 H448.4 V48 H552 C565.3 48 576 58.7 576 72 V128 C576 189 506 253 421 270 C393 314 352 344 328 356 V416 H376 C411 416 440 445 440 480 V500 C440 506.6 434.6 512 428 512 H148 C141.4 512 136 506.600 136 500 V480 C136 445 165 416 200 416 H248 V356 C224 344 183 314 155 270 C70 253 0 189 0 128 V72 C0 58.7 10.700 48 24 48 H127.6 Z M64 112 V128 C64 150 92 184 128.500 199 C127.9 172 127.6 112 127.6 112 Z M512 112 H448.4 C448.4 112 448.100 172 447.500 199 C484 184 512 150 512 128 Z" fill="#CC2A00" fill-rule="evenodd"/></svg>
<svg class="b" style="left:1115px;top:478px;" width="11" height="10" viewBox="0 0 11 10"><path d="M1.3 1.2 L9.7 8.8 M9.7 1.2 L1.3 8.8" stroke="#000" stroke-width="1.6" fill="none"/></svg>
<svg class="b" style="left:975.8px;top:590.5px;" width="16" height="16" viewBox="0 0 16 16"><path d="M6.2 1.500 H2.7 a1.3 1.3 0 0 0 -1.300 1.300 V12.500 a1.3 1.3 0 0 0 1.300 1.300 H12.6 a1.3 1.3 0 0 0 1.300 -1.300 V9.100" fill="none" stroke="#0D5C8C" stroke-width="1.9" stroke-linejoin="round"/><path d="M5.4 9.800 L13.300 1.900" fill="none" stroke="#0D5C8C" stroke-width="1.7"/><path d="M8.6 0.500 H14.800 V6.700 Z" fill="#0D5C8C"/></svg>
<svg class="b" style="left:1058.3px;top:617.4px;" width="16" height="16" viewBox="0 0 16 16"><path d="M6.2 1.500 H2.7 a1.3 1.3 0 0 0 -1.300 1.300 V12.500 a1.3 1.3 0 0 0 1.300 1.300 H12.6 a1.3 1.3 0 0 0 1.300 -1.300 V9.100" fill="none" stroke="#0D5C8C" stroke-width="1.9" stroke-linejoin="round"/><path d="M5.4 9.800 L13.300 1.900" fill="none" stroke="#0D5C8C" stroke-width="1.7"/><path d="M8.6 0.500 H14.800 V6.700 Z" fill="#0D5C8C"/></svg>
</div>
</body></html>
